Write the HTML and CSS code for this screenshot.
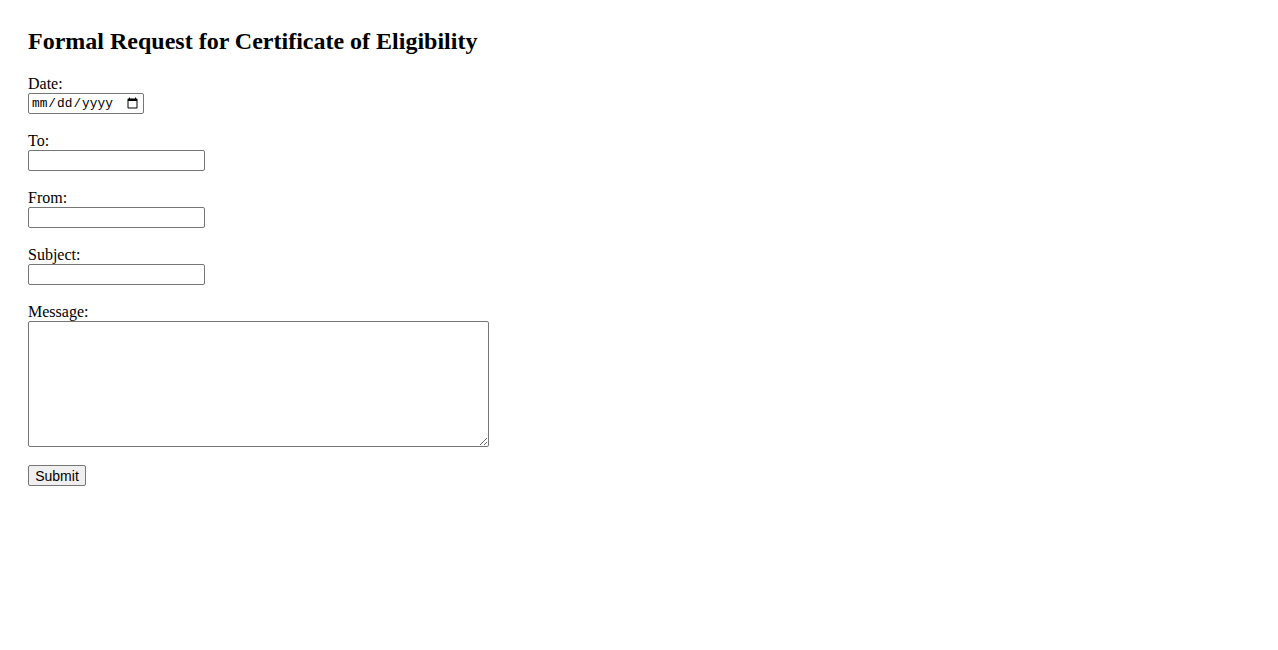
FILE: index.html
```html
<!DOCTYPE html>
<html lang="en">
<head>
<meta charset="UTF-8">
<meta name="viewport" content="width=device-width, initial-scale=1.0">
<title>Formal Request for Certificate of Eligibility</title>
<link rel="stylesheet" href="styles.css">
</head>
<body>
<h2 class="title">Formal Request for Certificate of Eligibility</h2>

<form id="requestForm">
  <label for="date">Date:</label><br>
  <input type="date" id="date" class="date-field"><br><br>

  <label for="to">To:</label><br>
  <input type="text" id="to" class="text-field"><br><br>

  <label for="from">From:</label><br>
  <input type="text" id="from" class="text-field"><br><br>

  <label for="subject">Subject:</label><br>
  <input type="text" id="subject" class="text-field"><br><br>

  <label for="message">Message:</label><br>
  <textarea id="message" class="message-field" rows="8" cols="55"></textarea><br><br>

  <input type="submit" value="Submit" class="submit-button">
</form>
</body>
</html>
```

FILE: styles.css
```css
body {
  font-family: 'Liberation Serif', 'Times New Roman', serif;
  font-size: 16px;
  margin: 8px;
  padding: 20px;
  color: #000;
  background-color: #fff;
}

.title {
  font-size: 24px;
  margin-top: 0;
  margin-bottom: 20px;
}

.text-field,
.date-field,
.message-field,
.submit-button {
  font-family: 'Liberation Sans', Arial, sans-serif;
  font-size: 13.333px;
  border: 1px solid #767676;
  border-radius: 2px;
  box-sizing: border-box;
  margin: 0;
}

.text-field {
  width: 177px;
  height: 21px;
  padding: 1px 2px;
}

.date-field {
  font-family: 'Liberation Mono', 'Courier New', monospace;
  font-size: 12.8px;
  width: 116px;
  height: 21px;
  padding: 1px 2px;
}

.message-field {
  width: 461px;
  height: 126px;
  padding: 2px;
  vertical-align: bottom;
}

.submit-button {
  font-size: 14px;
  width: 58px;
  height: 21px;
  padding: 1px 6px;
  background-color: #efefef;
  color: #000;
}
```
